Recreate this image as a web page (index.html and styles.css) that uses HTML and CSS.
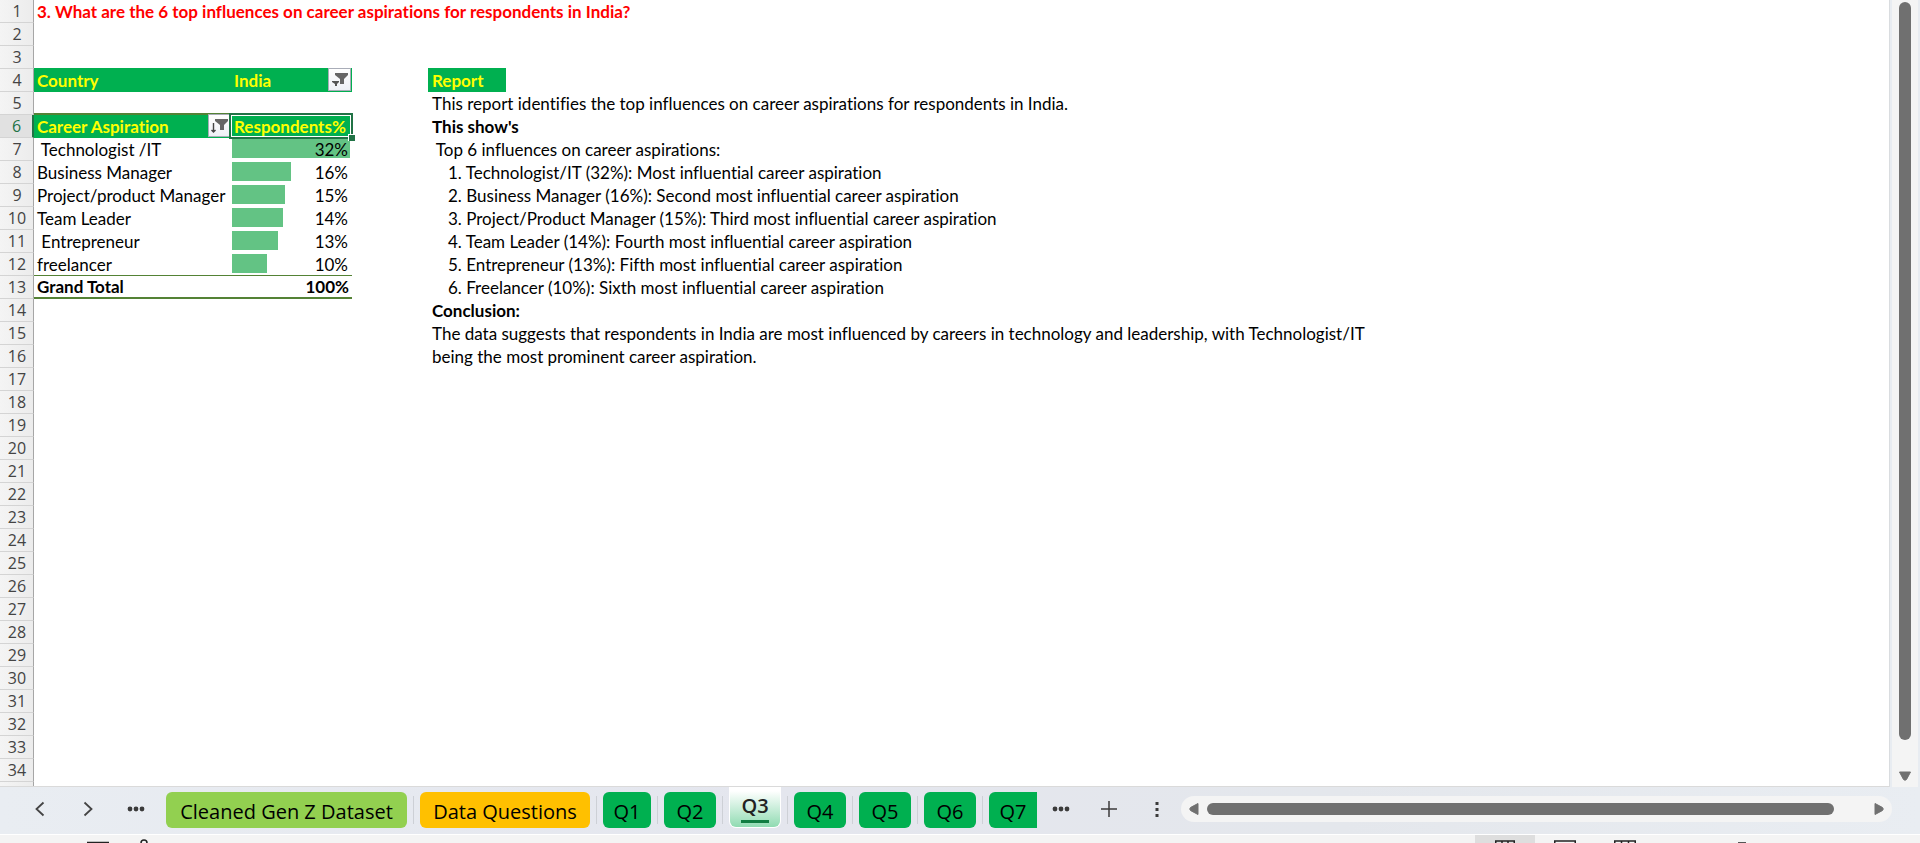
FILE: index.html
```
<!DOCTYPE html>
<html lang="en">
<head>
<meta charset="utf-8">
<title>Career aspirations – Q3</title>
<link rel="stylesheet" href="styles.css">
</head>
<body>
<main class="workspace">
  <div class="sheet">
    <table class="grid">
      <colgroup><col class="c-head"><col class="c-a"><col class="c-b"><col class="c-c"><col class="c-d"><col></colgroup>
      <tbody>
        <tr><th scope="row">1</th><td class="title" colspan="5">3. What are the 6 top influences on career aspirations for respondents in India?</td></tr>
        <tr><th scope="row">2</th><td colspan="5"></td></tr>
        <tr><th scope="row">3</th><td colspan="5"></td></tr>
        <tr><th scope="row">4</th><td class="green">Country</td><td class="green with-filter">India<button class="filter inset" type="button" aria-label="Filter country"><svg viewBox="0 0 21 21" width="21" height="21"><path d="M6 4h13v2l-4 4v5h-4v-5L6 6z" fill="#666"/><path d="M3 12h7v1l-2 2v2H6v-2l-3-2z" fill="#555"/></svg></button></td><td></td><td class="green report">Report</td><td></td></tr>
        <tr><th scope="row">5</th><td></td><td></td><td></td><td class="report" colspan="2">This report identifies the top influences on career aspirations for respondents in India.</td></tr>
        <tr class="current"><th scope="row">6</th><td class="green with-filter top-rule">Career Aspiration<button class="filter" type="button" aria-label="Sort and filter career aspiration"><svg viewBox="0 0 21 21" width="21" height="21"><path d="M6 4h13v2l-4 4v5h-4v-5L6 6z" fill="#666"/><path d="M4.500 8v9M2.500 15l2 2 2-2" fill="none" stroke="#444" stroke-width="1.400"/></svg></button></td><td class="green selected">Respondents%<span class="handle"></span></td><td></td><td class="report bold" colspan="2">This show's</td></tr>
        <tr><th scope="row">7</th><td>&nbsp;Technologist /IT</td><td class="value"><div class="databar"><span class="bar" style="width:100%"></span><span class="num">32%</span></div></td><td></td><td class="report" colspan="2">&nbsp;Top 6 influences on career aspirations:</td></tr>
        <tr><th scope="row">8</th><td>Business Manager</td><td class="value"><div class="databar"><span class="bar" style="width:50%"></span><span class="num">16%</span></div></td><td></td><td class="item" colspan="2">1. Technologist/IT (32%): Most influential career aspiration</td></tr>
        <tr><th scope="row">9</th><td>Project/product Manager</td><td class="value"><div class="databar"><span class="bar" style="width:45%"></span><span class="num">15%</span></div></td><td></td><td class="item" colspan="2">2. Business Manager (16%): Second most influential career aspiration</td></tr>
        <tr><th scope="row">10</th><td>Team Leader</td><td class="value"><div class="databar"><span class="bar" style="width:43%"></span><span class="num">14%</span></div></td><td></td><td class="item" colspan="2">3. Project/Product Manager (15%): Third most influential career aspiration</td></tr>
        <tr><th scope="row">11</th><td>&nbsp;Entrepreneur</td><td class="value"><div class="databar"><span class="bar" style="width:39%"></span><span class="num">13%</span></div></td><td></td><td class="item" colspan="2">4. Team Leader (14%): Fourth most influential career aspiration</td></tr>
        <tr><th scope="row">12</th><td>freelancer</td><td class="value"><div class="databar"><span class="bar" style="width:30%"></span><span class="num">10%</span></div></td><td></td><td class="item" colspan="2">5. Entrepreneur (13%): Fifth most influential career aspiration</td></tr>
        <tr><th scope="row">13</th><td class="total">Grand Total</td><td class="total right">100%</td><td></td><td class="item" colspan="2">6. Freelancer (10%): Sixth most influential career aspiration</td></tr>
        <tr><th scope="row">14</th><td></td><td></td><td></td><td class="report bold" colspan="2">Conclusion:</td></tr>
        <tr><th scope="row">15</th><td></td><td></td><td></td><td class="report" colspan="2">The data suggests that respondents in India are most influenced by careers in technology and leadership, with Technologist/IT</td></tr>
        <tr><th scope="row">16</th><td></td><td></td><td></td><td class="report" colspan="2">being the most prominent career aspiration.</td></tr>
        <tr><th scope="row">17</th><td colspan="5"></td></tr>
        <tr><th scope="row">18</th><td colspan="5"></td></tr>
        <tr><th scope="row">19</th><td colspan="5"></td></tr>
        <tr><th scope="row">20</th><td colspan="5"></td></tr>
        <tr><th scope="row">21</th><td colspan="5"></td></tr>
        <tr><th scope="row">22</th><td colspan="5"></td></tr>
        <tr><th scope="row">23</th><td colspan="5"></td></tr>
        <tr><th scope="row">24</th><td colspan="5"></td></tr>
        <tr><th scope="row">25</th><td colspan="5"></td></tr>
        <tr><th scope="row">26</th><td colspan="5"></td></tr>
        <tr><th scope="row">27</th><td colspan="5"></td></tr>
        <tr><th scope="row">28</th><td colspan="5"></td></tr>
        <tr><th scope="row">29</th><td colspan="5"></td></tr>
        <tr><th scope="row">30</th><td colspan="5"></td></tr>
        <tr><th scope="row">31</th><td colspan="5"></td></tr>
        <tr><th scope="row">32</th><td colspan="5"></td></tr>
        <tr><th scope="row">33</th><td colspan="5"></td></tr>
        <tr><th scope="row">34</th><td colspan="5"></td></tr>
        <tr><th></th><td colspan="5"></td></tr>
      </tbody>
    </table>
  </div>
  <div class="vscroll">
    <div class="vtrack">
      <div class="vthumb"></div>
      <button class="arrow" type="button" aria-label="Scroll down"><svg viewBox="0 0 14 10" width="14" height="10"><path d="M1.500 1h11L8.500 8.500q-1.500 1.500-3 0z" fill="#707070" stroke="#707070" stroke-linejoin="round"/></svg></button>
    </div>
  </div>
</main>

<nav class="tabbar" aria-label="Sheets">
  <div class="navs">
    <button type="button" aria-label="Previous sheet"><svg viewBox="0 0 12 16" width="12" height="16"><path d="M9.500 1.500L2.500 8l7 6.500" fill="none" stroke="#444" stroke-width="1.800"/></svg></button>
    <button type="button" aria-label="Next sheet"><svg viewBox="0 0 12 16" width="12" height="16"><path d="M2.500 1.500L9.500 8l-7 6.500" fill="none" stroke="#444" stroke-width="1.800"/></svg></button>
    <button type="button" aria-label="Earlier sheets"><svg viewBox="0 0 18 6" width="18" height="6"><g fill="#3b3b3b"><circle cx="3" cy="3" r="2.400"/><circle cx="9" cy="3" r="2.400"/><circle cx="15" cy="3" r="2.400"/></g></svg></button>
  </div>
  <div class="tabs">
    <button class="tab lime" type="button">Cleaned Gen Z Dataset</button><i></i>
    <button class="tab amber" type="button">Data Questions</button><i></i>
    <button class="tab q cut" type="button">Q1</button><i></i>
    <button class="tab q" type="button">Q2</button><i></i>
    <button class="tab active" type="button" aria-current="page"><span>Q3</span></button><i></i>
    <button class="tab q" type="button">Q4</button><i></i>
    <button class="tab q" type="button">Q5</button><i></i>
    <button class="tab q" type="button">Q6</button><i></i>
    <button class="tab q cut last" type="button">Q7</button>
  </div>
  <div class="tools">
    <button type="button" aria-label="Later sheets"><svg viewBox="0 0 18 6" width="18" height="6"><g fill="#3b3b3b"><circle cx="3" cy="3" r="2.400"/><circle cx="9" cy="3" r="2.400"/><circle cx="15" cy="3" r="2.400"/></g></svg></button>
    <button type="button" aria-label="New sheet"><svg viewBox="0 0 18 18" width="18" height="18"><path d="M9 1v16M1 9h16" stroke="#3b3b3b" stroke-width="1.500"/></svg></button>
    <button type="button" aria-label="Resize tabs"><svg viewBox="0 0 6 18" width="6" height="18"><path d="M1.500 2h3v3h-3zM1.500 8h3v3h-3zM1.500 14h3v3h-3z" fill="#3b3b3b"/></svg></button>
  </div>
  <div class="hscroll">
    <button class="arrow" type="button" aria-label="Scroll left"><svg viewBox="0 0 10 14" width="10" height="14"><path d="M9 1.500v11L1.500 8.500q-1.500-1.500 0-3z" fill="#707070" stroke="#707070" stroke-linejoin="round"/></svg></button>
    <div class="htrack"><div class="hthumb"></div></div>
    <button class="arrow" type="button" aria-label="Scroll right"><svg viewBox="0 0 10 14" width="10" height="14"><path d="M1 1.500v11L8.500 8.500q1.500-1.500 0-3z" fill="#707070" stroke="#707070" stroke-linejoin="round"/></svg></button>
  </div>
</nav>

<footer class="status">
  <div class="left">
    <svg viewBox="0 0 22 8" width="22" height="8"><path d="M0 7.500h22" stroke="#222" stroke-width="1.500"/></svg>
    <svg viewBox="0 0 8 8" width="8" height="8"><path d="M1 8a3 3 0 0 1 6 0" fill="none" stroke="#222" stroke-width="1.500"/></svg>
  </div>
  <div class="views">
    <span class="view on"><svg viewBox="0 0 20 8" width="20" height="8"><path d="M.75 8V6h18.500v2M7 6v2M13 6v2" fill="none" stroke="#222" stroke-width="1.500"/></svg></span>
    <span class="view"><svg viewBox="0 0 22 8" width="22" height="8"><path d="M.75 8V6h20.500v2" fill="none" stroke="#222" stroke-width="1.500"/></svg></span>
    <span class="view"><svg viewBox="0 0 22 8" width="22" height="8"><path d="M.75 8V6h20.500v2M7.500 6v2M14.500 6v2" fill="none" stroke="#222" stroke-width="1.500"/></svg></span>
    <span class="zoom"></span>
  </div>
</footer>
</body>
</html>
```
FILE: styles.css
```
* { box-sizing: border-box; }
body {
  margin: 0;
  height: 100vh;
  display: flex;
  flex-direction: column;
  overflow: hidden;
  background: #e8ebf0;
  font-family: Lato, "Liberation Sans", sans-serif;
  font-size: 17px;
  font-variant-ligatures: none;
  color: #000;
}
button { border: 0; padding: 0; margin: 0; background: none; font: inherit; color: inherit; display: flex; align-items: center; justify-content: center; }
svg { display: block; }

.workspace { flex: 1; min-height: 0; display: flex; }
.sheet { flex: 1; min-width: 0; overflow: hidden; background: #fff; border-right: 1px solid #d9dcdf; border-bottom: 1px solid #dadada; }

.grid { width: 100%; table-layout: fixed; border-collapse: separate; border-spacing: 0; }
.c-head { width: 34px; }
.c-a { width: 197px; }
.c-b { width: 121px; }
.c-c { width: 76px; }
.c-d { width: 78px; }
.grid tr { height: 23px; }
.grid th {
  padding: 0 0 0 1px;
  border-right: 1px solid #a6a6a6;
  border-bottom: 1px solid #d4d4d4;
  background: linear-gradient(90deg, #f4f4f4, #ececec);
  font: 400 16px/22px "Open Sans", "Noto Sans", sans-serif;
  color: #444;
  text-align: center;
}
.grid td { padding: 1px 3px 0; line-height: 22px; white-space: nowrap; vertical-align: top; }
.grid .current th { background: #e1e1e1; color: #217346; border-right: 2px solid #217346; }
.grid .title { color: #f00; font-weight: 700; }
.grid .bold { font-weight: 700; }
.grid .report { padding-left: 4px; }
.grid .item { padding-left: 20px; }
.grid .green { background: #00b050; box-shadow: 0 -1px #00b050; color: #ff0; font-weight: 700; }
.grid .with-filter { position: relative; }
.grid .top-rule { box-shadow: 0 -2px #548235; }
.filter { position: absolute; right: 0; top: -1px; width: 23px; height: 23px; border: 1px solid #a9adb8; background: linear-gradient(#fff, #eef0f6); }
.filter.inset { right: 1px; }
.grid .selected { position: relative; }
.selected::before { content: ""; position: absolute; inset: -2px -1px -1px -2px; border: 2px solid #217346; outline: 1px solid #fff; outline-offset: -3px; }
.handle { position: absolute; right: -3px; bottom: -3px; width: 7px; height: 7px; background: #217346; border: 1px solid #fff; border-width: 1px 0 0 1px; }
.grid .value { padding: 1px 2px 0 1px; }
.databar { display: grid; align-items: start; }
.databar > * { grid-area: 1 / 1; }
.bar { height: 19px; background: #63c384; }
.num { text-align: right; padding-right: 2px; }
.grid .total { font-weight: 700; line-height: 20px; box-shadow: 0 -1px #548235; border-bottom: 2px solid #548235; }
.right { text-align: right; }

.vscroll { width: 30px; padding-left: 2px; background: #e8ecf1; }
.vtrack { width: 26px; height: 100%; padding-top: 2px; background: #f4f4f4; display: flex; flex-direction: column; align-items: center; justify-content: space-between; }
.vthumb { width: 12px; flex: 1; margin-bottom: 31px; border-radius: 6px; background: #707070; }
.vtrack .arrow { height: 16px; align-items: flex-start; }

.tabbar { flex: none; height: 48px; display: flex; align-items: center; padding-bottom: 3px; background: linear-gradient(90deg, #e9edf2, #e4e6ee 40%, #e4e7ec 70%, #e9edf2); border-bottom: 1px solid #fff; }
.navs { flex: none; width: 166px; display: flex; padding-left: 16px; }
.navs button, .tools button { width: 48px; height: 28px; }
.tabs { flex: none; display: flex; align-items: center; align-self: stretch; padding-top: 2px; font-family: "Open Sans", "Noto Sans", sans-serif; font-size: 20px; }
.tabs i { width: 1px; height: 28px; margin: 0 6px; background: #cdd0d6; }
.tab { height: 36px; border-radius: 6px; background: #00b050; padding-top: 3px; }
.lime { width: 241px; background: #92d050; }
.amber { width: 170px; background: #ffc000; }
.q { width: 52px; }
.cut { width: 48px; }
.last { border-radius: 6px 0 0 6px; }
.active { width: 52px; height: 41px; align-self: flex-start; margin-top: -2px; padding: 0; border: 1px solid #fff; border-top: 0; border-radius: 0 0 7px 7px; background: linear-gradient(#fff 10%, #90dbb2); color: #222; font-weight: 600; }
.active span { line-height: 28px; border-bottom: 3px solid #107c41; }
.tools { flex: none; display: flex; align-items: center; }
.hscroll { flex: 1; height: 26px; margin-right: 28px; padding: 0 8px; display: flex; align-items: center; gap: 8px; border-radius: 13px; background: #f4f4f4; }
.htrack { flex: 1; padding-right: 32px; }
.hthumb { height: 12px; border-radius: 6px; background: #707070; }

.status { flex: none; height: 8px; display: flex; justify-content: space-between; background: #f4f4f4; }
.left { display: flex; padding-left: 87px; gap: 31px; }
.views { display: flex; padding-right: 174px; }
.view { width: 60px; display: flex; justify-content: center; }
.on { background: #dedede; }
.zoom { width: 8px; height: 1px; align-self: flex-end; margin-left: 83px; background: #555; }
```
